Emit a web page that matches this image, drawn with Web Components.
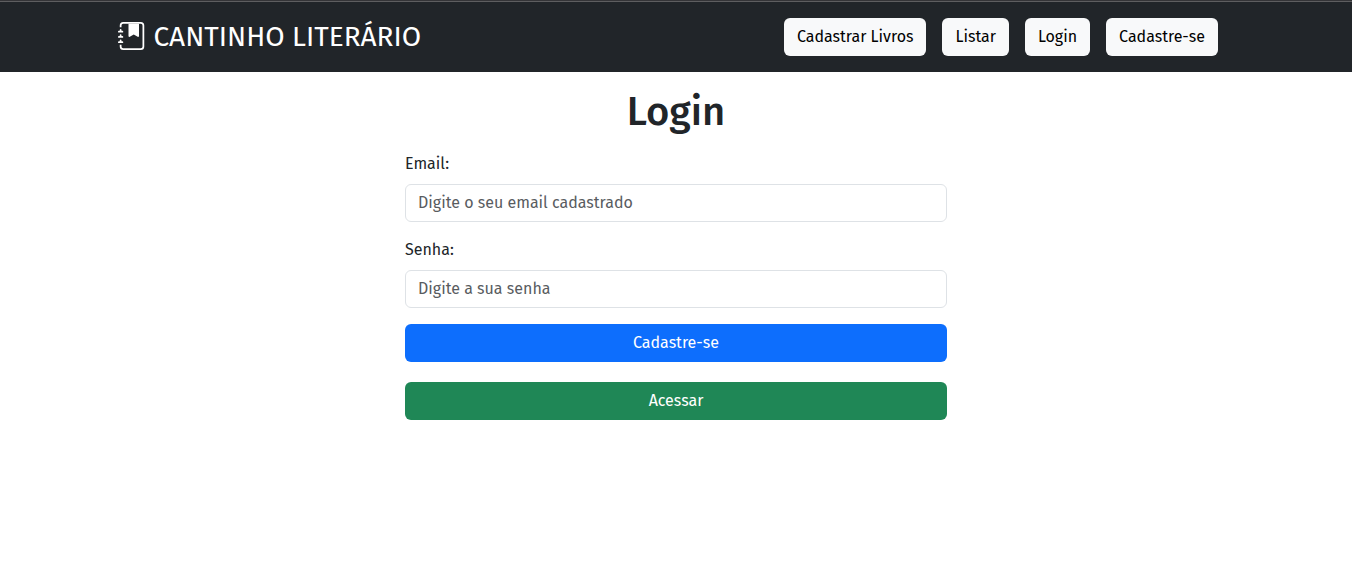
<!DOCTYPE html>
<html lang="pt-BR">
<head>
<meta charset="utf-8">
<meta name="viewport" content="width=device-width, initial-scale=1">
<title>Cantinho Literário</title>
<style>
  body { margin: 0; background: #fff; color: #212529; font: 16px/24px "Fira Sans", "Noto Sans", sans-serif; }
</style>
</head>
<body>
<site-header>
  <brand-link slot="brand">CANTINHO LITERÁRIO</brand-link>
  <nav-link href="#cadastrar">Cadastrar Livros</nav-link>
  <nav-link href="#listar">Listar</nav-link>
  <nav-link href="#login">Login</nav-link>
  <nav-link href="#cadastro">Cadastre-se</nav-link>
</site-header>
<login-form></login-form>

<script>
class BaseElement extends HTMLElement {
  render(html) {
    const template = document.createElement('template');
    template.innerHTML = html;
    this.attachShadow({ mode: 'open' }).append(template.content.cloneNode(true));
  }
}

customElements.define('site-header', class extends BaseElement {
  connectedCallback() {
    this.render(`
      <style>
        :host { display: block; background: #212529; border-top: 1px solid #343437; }
        header { border-top: 1px solid #5e5e60; }
        .bar { box-sizing: border-box; max-width: 1140px; margin: 0 auto; padding: 16px 12px; display: flex; align-items: center; justify-content: space-between; }
        nav { display: flex; gap: 16px; padding-right: 16px; }
      </style>
      <header><div class="bar"><slot name="brand"></slot><nav><slot></slot></nav></div></header>`);
  }
});

customElements.define('brand-link', class extends BaseElement {
  connectedCallback() {
    this.render(`
      <style>
        :host { display: block; }
        a { display: block; color: #fff; text-decoration: none; font-size: 28px; line-height: 38px; white-space: nowrap; }
        svg { width: 28px; height: 28px; vertical-align: -4px; fill: currentColor; }
      </style>
      <a href="#inicio"><svg viewBox="0 0 16 16" aria-hidden="true">
          <path fill-rule="evenodd" d="M6 1h6v7a.5.5 0 0 1-.757.429L9 7.083 6.757 8.43A.5.5 0 0 1 6 8z"/>
          <path d="M3 0h10a2 2 0 0 1 2 2v12a2 2 0 0 1-2 2H3a2 2 0 0 1-2-2v-1h1v1a1 1 0 0 0 1 1h10a1 1 0 0 0 1-1V2a1 1 0 0 0-1-1H3a1 1 0 0 0-1 1v1H1V2a2 2 0 0 1 2-2"/>
          <path d="M1 5v-.5a.5.5 0 0 1 1 0V5h.5a.5.5 0 0 1 0 1h-2a.5.5 0 0 1 0-1zm0 3v-.5a.5.5 0 0 1 1 0V8h.5a.5.5 0 0 1 0 1h-2a.5.5 0 0 1 0-1zm0 3v-.5a.5.5 0 0 1 1 0v.5h.5a.5.5 0 0 1 0 1h-2a.5.5 0 0 1 0-1z"/>
        </svg> <slot></slot></a>`);
  }
});

customElements.define('nav-link', class extends BaseElement {
  connectedCallback() {
    this.render(`
      <style>
        :host { display: block; }
        a { display: block; padding: 7px 13px; border-radius: 6px; background: #f8f9fa; color: #000; text-decoration: none; white-space: nowrap; }
      </style>
      <a><slot></slot></a>`);
    this.shadowRoot.querySelector('a').href = this.getAttribute('href');
  }
});

customElements.define('text-field', class extends BaseElement {
  connectedCallback() {
    this.render(`
      <style>
        :host { display: block; }
        label { display: block; margin-bottom: 8px; }
        input { display: block; box-sizing: border-box; width: 100%; padding: 6px 12px; border: 1px solid #dee2e6; border-radius: 6px; background: #fff; color: inherit; font: inherit; }
        input::placeholder { color: #595c5f; opacity: 1; }
      </style>
      <label for="field"><slot></slot></label>
      <input id="field">`);
    const input = this.shadowRoot.querySelector('input');
    input.type = this.getAttribute('type');
    input.placeholder = this.getAttribute('placeholder');
  }
});

customElements.define('action-button', class extends BaseElement {
  connectedCallback() {
    this.render(`
      <style>
        :host { display: block; --fill: #0d6efd; }
        :host([variant="success"]) { --fill: #1f8756; }
        button { display: block; width: 100%; padding: 7px 13px; border: 0; border-radius: 6px; background: var(--fill); color: #fff; font: inherit; cursor: pointer; }
      </style>
      <button type="button"><slot></slot></button>`);
  }
});

customElements.define('login-form', class extends BaseElement {
  connectedCallback() {
    this.render(`
      <style>
        :host { display: block; max-width: 542px; margin: 16px auto; }
        h1 { margin: 0 0 16px; font-size: 40px; line-height: 48px; font-weight: 500; text-align: center; }
        form, .actions { display: grid; gap: 16px; }
        .actions { gap: 20px; }
      </style>
      <h1>Login</h1>
      <form>
        <text-field type="email" placeholder="Digite o seu email cadastrado">Email:</text-field>
        <text-field type="password" placeholder="Digite a sua senha">Senha:</text-field>
        <div class="actions">
          <action-button>Cadastre-se</action-button>
          <action-button variant="success">Acessar</action-button>
        </div>
      </form>`);
  }
});
</script>
</body>
</html>
